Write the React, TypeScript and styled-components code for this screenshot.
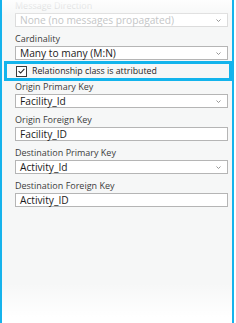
import React from "react";
import styled, { createGlobalStyle } from "styled-components";

const Global = createGlobalStyle`
  html, body { margin: 0; padding: 0; background: #ffffff; }
  body { font-family: "Open Sans", "Noto Sans", sans-serif; }
`;

const Panel = styled.div`
  position: relative;
  width: 230px;
  height: 323px;
  overflow: hidden;
  background: #f6f7f7;
  border-left: 2px solid #16b3ec;
  border-right: 2px solid #16b3ec;
`;

const Content = styled.div`
  display: flex;
  flex-direction: column;
  padding: 0 4px 0 13px;
`;

const Field = styled.div`
  display: flex;
  flex-direction: column;
  margin-bottom: 6px;
`;

const Label = styled.div<{ $disabled?: boolean }>`
  font-size: 9px;
  line-height: 12px;
  height: 12px;
  color: ${(p) => (p.$disabled ? "#c9cbcc" : "#3c3c3c")};
  margin-bottom: 1px;
  white-space: nowrap;
`;

const Box = styled.div<{ $disabled?: boolean }>`
  height: 12px;
  box-sizing: content-box;
  border: 1px solid ${(p) => (p.$disabled ? "#dcdcdc" : "#b5b5b5")};
  background: #ffffff;
  display: flex;
  align-items: center;
  justify-content: space-between;
  padding: 0 6px 0 4px;
  font-size: 10.2px;
  line-height: 12px;
  color: ${(p) => (p.$disabled ? "#c4c6c7" : "#1a1a1a")};
  white-space: nowrap;
`;

const Chevron = styled.svg`
  width: 5px;
  height: 3px;
  flex: none;
`;

const Highlight = styled.div`
  display: flex;
  align-items: center;
  gap: 5px;
  height: 14px;
  margin: -5px -4px 0 -11px;
  padding-left: 9px;
  border: 3px solid #13b4ec;
  font-size: 8.8px;
  color: #262626;
  white-space: nowrap;
`;

const Check = styled.span`
  width: 9px;
  height: 9px;
  border: 1px solid #3a3a3a;
  background: #ffffff;
  display: flex;
  align-items: center;
  justify-content: center;
  flex: none;
`;

const FadeTop = styled.div`
  position: absolute;
  left: -2px;
  right: -2px;
  top: 0;
  height: 16px;
  background: linear-gradient(rgba(255,255,255,0.85), rgba(255,255,255,0));
  pointer-events: none;
`;

const FadeBottom = styled.div`
  position: absolute;
  left: -2px;
  right: -2px;
  bottom: 0;
  height: 40px;
  background: linear-gradient(rgba(255,255,255,0), rgba(255,255,255,1) 85%);
  pointer-events: none;
`;

const Down = () => (
  <Chevron viewBox="0 0 5 3">
    <path d="M0.5 0.5 L2.5 2.5 L4.5 0.5" fill="none" stroke="#8a8a8a" strokeWidth="0.9" />
  </Chevron>
);

type F = { label: string; value: string; select?: boolean; disabled?: boolean };

const fieldsA: F[] = [
  { label: "Message Direction", value: "None (no messages propagated)", select: true, disabled: true },
  { label: "Cardinality", value: "Many to many (M:N)", select: true },
];

const fieldsB: F[] = [
  { label: "Origin Primary Key", value: "Facility_Id", select: true },
  { label: "Origin Foreign Key", value: "Facility_ID" },
  { label: "Destination Primary Key", value: "Activity_Id", select: true },
  { label: "Destination Foreign Key", value: "Activity_ID" },
];

const FieldView = ({ f }: { f: F }) => (
  <Field>
    <Label $disabled={f.disabled}>{f.label}</Label>
    <Box $disabled={f.disabled}>
      <span>{f.value}</span>
      {f.select && <Down />}
    </Box>
  </Field>
);

export default function App() {
  return (
    <>
      <Global />
      <Panel>
        <Content>
          {fieldsA.map((f) => (
            <FieldView key={f.label} f={f} />
          ))}
          <Highlight>
            <Check>
              <svg width="7" height="6" viewBox="0 0 7 6">
                <path d="M0.6 3.1 L2.6 5 L6.4 0.8" fill="none" stroke="#222" strokeWidth="1.1" />
              </svg>
            </Check>
            <span>Relationship class is attributed</span>
          </Highlight>
          {fieldsB.map((f) => (
            <FieldView key={f.label} f={f} />
          ))}
        </Content>
        <FadeTop />
        <FadeBottom />
      </Panel>
    </>
  );
}
